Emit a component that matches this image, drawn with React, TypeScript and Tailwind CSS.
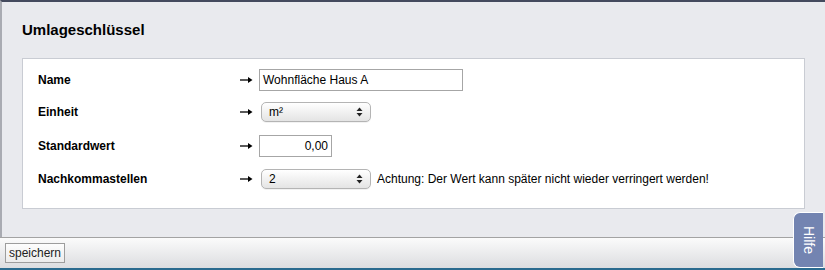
import React from "react";

const font = { fontFamily: '"Liberation Sans", Arial, sans-serif' };

function Arrow() {
  return (
    <span className="flex w-[19px] shrink-0 items-center">
      <svg width="13" height="8" viewBox="0 0 13 8">
        <path d="M0 4 H10" stroke="#000" strokeWidth="1.3" />
        <path d="M8 1 L12.5 4 L8 7 Z" fill="#000" />
      </svg>
    </span>
  );
}

function Select({ value }: { value: string }) {
  return (
    <div className="ml-[2px] flex h-[20px] w-[110px] items-center justify-between rounded-[5px] border border-[#b4b4b4] bg-gradient-to-b from-[#ffffff] to-[#e4e4e4] pl-[7px] pr-[7px] text-[12px] text-black shadow-[0_1px_0_rgba(0,0,0,0.05)]">
      <span>{value}</span>
      <svg width="7" height="10" viewBox="0 0 7 10">
        <path d="M3.5 0.5 L6.5 4 H0.5 Z" fill="#222" />
        <path d="M3.5 9.5 L6.5 6 H0.5 Z" fill="#222" />
      </svg>
    </div>
  );
}

function Row({ label, h, children }: { label: string; h: string; children: React.ReactNode }) {
  return (
    <div className={`flex items-center ${h}`}>
      <div className="w-[202px] shrink-0 text-[12px] font-bold text-black">{label}</div>
      <Arrow />
      {children}
    </div>
  );
}

export default function App() {
  return (
    <div className="relative flex h-[270px] w-[825px] flex-col overflow-hidden bg-[#e9eaee]" style={font}>
      <div className="flex flex-1 flex-col border-t-2 border-l-2 border-t-[#444a5e] border-l-[#a9abb2]">
        {/* Title */}
        <h1 className="pl-[20px] pt-[19px] text-[15px] font-bold leading-[18px] text-black">Umlageschlüssel</h1>

        {/* Panel */}
        <div className="ml-[20px] mr-[20px] mt-[19px] h-[151px] border border-[#c9ccd3] bg-white pl-[15px] pt-[5px]">
          <Row label="Name" h="h-[32px]">
            <div className="flex h-[22px] w-[204px] items-center border border-[#a6a6a6] px-[3px] text-[12px] text-black">
              Wohnfläche Haus A
            </div>
          </Row>
          <Row label="Einheit" h="h-[32px]">
            <Select value="m²" />
          </Row>
          <Row label="Standardwert" h="h-[35px]">
            <div className="flex h-[22px] w-[73px] items-center justify-end border border-[#a6a6a6] px-[3px] text-[12px] text-black">
              0,00
            </div>
          </Row>
          <Row label="Nachkommastellen" h="h-[32px]">
            <Select value="2" />
            <span className="ml-[6px] text-[12px] text-black">
              Achtung: Der Wert kann später nicht wieder verringert werden!
            </span>
          </Row>
        </div>
      </div>

      {/* Bottom bar */}
      <div className="flex h-[31px] items-start border-t border-[#a3a3a3] bg-gradient-to-b from-[#fbfbfb] to-[#dcdde0] pl-[5px] pt-[5px]">
        <button className="h-[20px] w-[60px] border border-[#9d9d9d] bg-gradient-to-b from-[#fdfdfd] to-[#ececec] text-[12px] leading-none text-[#222]">
          speichern
        </button>
      </div>
      <div className="h-[2px] bg-[#2b6b8f]" />

      {/* Help tab */}
      <div className="absolute right-[2px] top-[212px] flex h-[56px] w-[30px] items-center justify-center rounded-l-[7px] border border-r-0 border-white bg-[#7384b1]">
        <span className="text-[14px] text-white [writing-mode:vertical-rl]">Hilfe</span>
      </div>
    </div>
  );
}
